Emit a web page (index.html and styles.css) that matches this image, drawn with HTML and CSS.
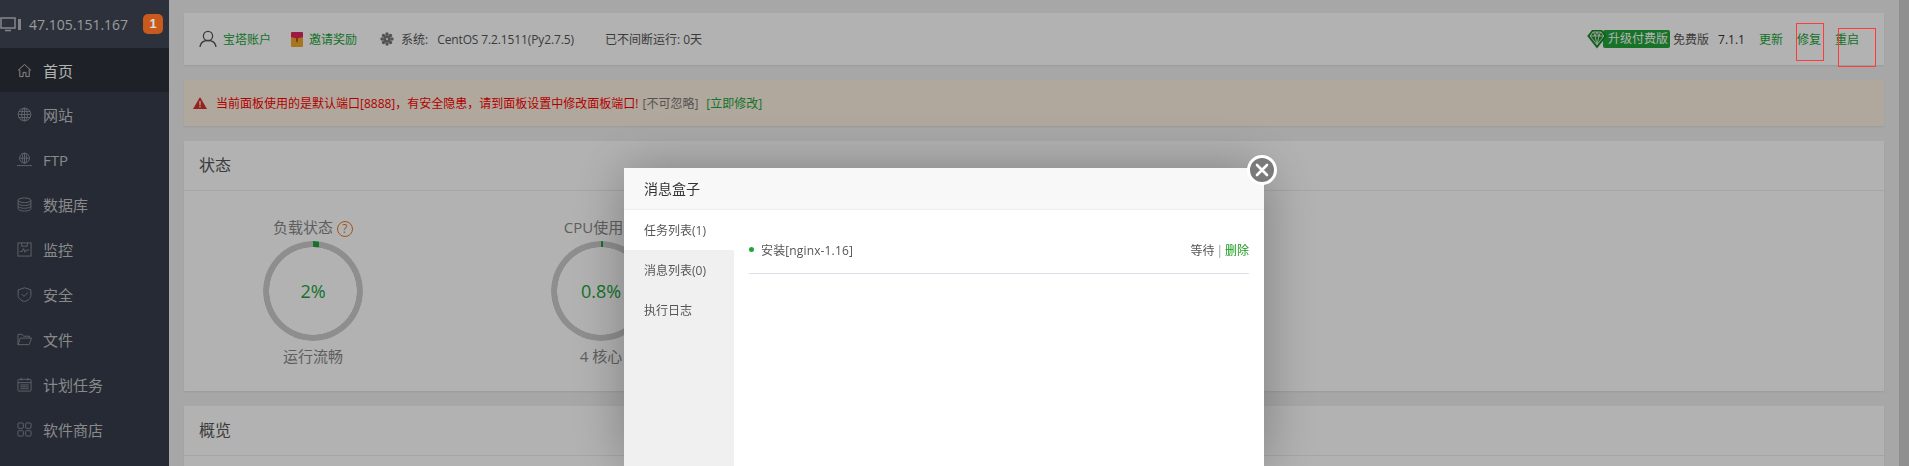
FILE: index.html
```html
<!DOCTYPE html>
<html lang="zh-CN">
<head>
    <meta charset="UTF-8">
    <title>宝塔面板</title>
    <link rel="stylesheet" href="styles.css">
</head>
<body>
    <div class="layout">
        <aside class="sidebar">
            <div class="server">
                <svg class="server-icon" viewBox="0 0 22 16" width="22" height="16" fill="none" stroke="#bbb" stroke-width="1.6"><rect x="1" y="2" width="14" height="10"/><path d="M5 14.5h6"/><rect x="18" y="3" width="3" height="11" fill="#bbb" stroke="none"/></svg>
                <span class="server-ip">47.105.151.167</span>
                <span class="badge">1</span>
            </div>
            <ul class="menu">
                <li class="menu-item active">
                    <svg viewBox="0 0 16 16" width="16" height="16"><path d="M1 8l7-6.5L15 8M3 7v7.500h3.500V10h3v4.500H13V7"/></svg>
                    <span>首页</span>
                </li>
                <li class="menu-item">
                    <svg viewBox="0 0 16 16" width="16" height="16"><circle cx="8" cy="8" r="6.800"/><ellipse cx="8" cy="8" rx="3" ry="6.800"/><path d="M1.200 8h13.600M2 4.800h12M2 11.200h12M8 1.200v13.600"/></svg>
                    <span>网站</span>
                </li>
                <li class="menu-item">
                    <svg viewBox="0 0 16 16" width="16" height="16"><circle cx="8" cy="6.500" r="5.300"/><ellipse cx="8" cy="6.500" rx="2.300" ry="5.300"/><path d="M2.700 6.500h10.600M8 1.200v10.600M0 14.500h16"/></svg>
                    <span>FTP</span>
                </li>
                <li class="menu-item">
                    <svg viewBox="0 0 16 16" width="16" height="16"><ellipse cx="8" cy="3.500" rx="6.800" ry="2.500"/><path d="M1.200 3.500v9c0 1.400 3 2.500 6.800 2.500s6.800-1.100 6.800-2.500v-9M1.200 6.500c0 1.400 3 2.500 6.800 2.500s6.800-1.100 6.800-2.500M1.200 9.500c0 1.400 3 2.500 6.800 2.500s6.800-1.100 6.800-2.500"/></svg>
                    <span>数据库</span>
                </li>
                <li class="menu-item">
                    <svg viewBox="0 0 16 16" width="16" height="16"><rect x="1" y="1" width="14" height="14"/><path d="M3 10h2.500l1.500-3 1.500 4 1.500-2.500H13M5 1v3.500h6V1"/></svg>
                    <span>监控</span>
                </li>
                <li class="menu-item">
                    <svg viewBox="0 0 16 16" width="16" height="16"><path d="M8 .8L14.800 3v6c0 3-3 5.500-6.800 6.500C4.200 14.500 1.200 12 1.200 9V3zM5 7.500l2.500 2.500L11.500 6"/></svg>
                    <span>安全</span>
                </li>
                <li class="menu-item">
                    <svg viewBox="0 0 16 16" width="16" height="16"><path d="M1 13.500V2.500h4.500l1.500 2h6.500v2M1 13.500h12L15.500 6.500H3.500z"/></svg>
                    <span>文件</span>
                </li>
                <li class="menu-item">
                    <svg viewBox="0 0 16 16" width="16" height="16"><rect x="1" y="2.500" width="14" height="12.500" rx="1"/><path d="M1 6h14M4.500 .8v3M11.500 .8v3M3.500 8.500h9M3.500 10.500h9M3.500 12.500h9"/></svg>
                    <span>计划任务</span>
                </li>
                <li class="menu-item">
                    <svg viewBox="0 0 16 16" width="16" height="16"><rect x="1" y="1" width="5.800" height="5.800" rx="1.200"/><rect x="9.200" y="1" width="5.800" height="5.800" rx="1.200"/><rect x="1" y="9.200" width="5.800" height="5.800" rx="1.200"/><rect x="9.200" y="9.200" width="5.800" height="5.800" rx="1.200"/></svg>
                    <span>软件商店</span>
                </li>
            </ul>
        </aside>

        <main class="content">
            <section class="card topbar">
                <div class="topbar-left">
                    <svg class="user-icon" viewBox="0 0 18 18" width="18" height="18" fill="none" stroke="#555" stroke-width="1.300"><circle cx="9" cy="6" r="4.600"/><path d="M1 17c.5-4 3.500-6.500 8-6.500s7.500 2.500 8 6.500"/></svg>
                    <a class="link account">宝塔账户</a>
                    <svg class="gift-icon" viewBox="0 0 12 15" width="12" height="15"><rect y="1" width="12" height="14" rx="1" fill="#f0a82a"/><path d="M0 1a1 1 0 0 1 1-1h10a1 1 0 0 1 1 1v4c-3 1.500-9 1.500-12 0z" fill="#e0245e"/><path d="M5 6h2v3l-1 2-1-2z" fill="#a85a10"/></svg>
                    <a class="link invite">邀请奖励</a>
                    <svg class="gear-icon" viewBox="0 0 14 14" width="14" height="14" fill="#777"><circle cx="7" cy="2" r="1.700"/><circle cx="7" cy="12" r="1.700"/><circle cx="2" cy="7" r="1.700"/><circle cx="12" cy="7" r="1.700"/><circle cx="3.500" cy="3.500" r="1.700"/><circle cx="10.500" cy="3.500" r="1.700"/><circle cx="3.500" cy="10.500" r="1.700"/><circle cx="10.500" cy="10.500" r="1.700"/><circle cx="7" cy="7" r="3.800"/><circle cx="7" cy="7" r="1.200" fill="#ddd"/></svg>
                    <span class="sys-label">系统:</span>
                    <span class="sys-name">CentOS 7.2.1511(Py2.7.5)</span>
                    <span>已不间断运行: 0天</span>
                </div>
                <div class="topbar-right">
                    <span class="upgrade">
                        <svg class="gem" viewBox="0 0 20 20" width="20" height="20"><path d="M5 1h10L19.800 7 10 19.500 .2 7z" fill="#1c8a2a"/><path d="M6 3h8L16.800 7 10 15.800 3.200 7zM3.200 7h13.600M8 7l2 8.500 2-8.500M6.500 3L8 7l2-4L12 7l1.500-4" fill="none" stroke="#e4f2e4" stroke-width=".9"/></svg>
                        <span class="upgrade-text">升级付费版</span>
                    </span>
                    <span class="free">免费版</span>
                    <span class="version">7.1.1</span>
                    <a class="link update">更新</a>
                    <a class="link repair">修复<i class="mark mark-repair"></i></a>
                    <a class="link restart">重启<i class="mark mark-restart"></i></a>
                </div>
            </section>

            <section class="card warning">
                <svg viewBox="0 0 14 12" width="14" height="12"><path d="M7 0l7 12H0z" fill="#d9302c"/><path d="M6.300 4h1.400v4.200H6.300zM6.300 9h1.400v1.400H6.300z" fill="#f3e6d0"/></svg>
                <span class="warning-text">当前面板使用的是默认端口[8888]，有安全隐患，请到面板设置中修改面板端口!</span>
                <span class="ignore">[不可忽略]</span>
                <a class="link fix">[立即修改]</a>
            </section>

            <section class="card status">
                <h2 class="card-title">状态</h2>
                <div class="gauges">
                    <div class="gauge">
                        <div class="gauge-label">负载状态 <span class="help">?</span></div>
                        <div class="ring ring-load"><span class="ring-value">2%</span></div>
                        <div class="gauge-note">运行流畅</div>
                    </div>
                    <div class="gauge">
                        <div class="gauge-label">CPU使用率</div>
                        <div class="ring ring-cpu"><span class="ring-value">0.8%</span></div>
                        <div class="gauge-note">4 核心</div>
                    </div>
                </div>
            </section>

            <section class="card overview">
                <h2 class="card-title">概览</h2>
            </section>
        </main>
        <div class="scrollbar"></div>
    </div>

    <div class="shade"></div>

    <div class="dialog">
        <button class="dialog-close" type="button">
            <svg viewBox="0 0 14 14" width="14" height="14"><path d="M2 2l10 10M12 2L2 12" stroke="#fff" stroke-width="2.600" stroke-linecap="round"/></svg>
        </button>
        <div class="dialog-title">消息盒子</div>
        <div class="dialog-body">
            <ul class="tabs">
                <li class="tab on">任务列表(1)</li>
                <li class="tab">消息列表(0)</li>
                <li class="tab">执行日志</li>
            </ul>
            <div class="tasks">
                <div class="task">
                    <span class="task-dot"></span>
                    <span class="task-name">安装[nginx-1.16]</span>
                    <span class="task-state">等待<span class="task-sep">|</span><a class="task-del">删除</a></span>
                </div>
            </div>
        </div>
    </div>
</body>
</html>
```

FILE: styles.css
```css
* {
    margin: 0;
    padding: 0;
    box-sizing: border-box;
}

html, body {
    height: 466px;
    overflow: hidden;
}

body {
    font-family: "Open Sans", "Noto Sans CJK SC", sans-serif;
    font-size: 12px;
    color: #555;
    background-color: #f0f0f0;
}

ul {
    list-style: none;
}

.layout {
    display: flex;
    height: 466px;
}

/* sidebar */
.sidebar {
    width: 169px;
    flex-shrink: 0;
    background-color: #353d4c;
}

.server {
    height: 48px;
    display: flex;
    align-items: center;
    background-color: #3f4756;
    color: #fff;
}

.server-icon {
    flex-shrink: 0;
    margin-right: 7px;
}

.server-ip {
    font-size: 14px;
    width: 114px;
    color: #ddd;
}

/* sits above the shade in the screenshot */
.badge {
    position: relative;
    z-index: 2;
    width: 20px;
    height: 20px;
    line-height: 20px;
    border-radius: 5px;
    background-color: #c95a1e;
    color: #ddd;
    font-family: "Liberation Sans", sans-serif;
    font-size: 13px;
    font-weight: bold;
    text-align: center;
}

.menu-item {
    height: 45px;
    display: flex;
    align-items: center;
    padding-left: 17px;
    font-size: 15px;
    color: #c4c4c4;
}

.menu-item svg {
    width: 15px;
    height: 15px;
    margin-right: 11px;
    fill: none;
    stroke: #8a8f98;
    stroke-width: 1;
}

.menu-item.active {
    height: 44px;
    background-color: #2b3038;
    color: #fff;
}

.menu-item.active svg {
    stroke: #ccc;
}

/* main column */
.content {
    flex: 1;
    padding: 13px 15px 0;
    min-width: 0;
}

.scrollbar {
    width: 10px;
    flex-shrink: 0;
    background-color: #cdcdcd;
}

.card {
    background-color: #fff;
    box-shadow: 0 1px 2px rgba(0, 0, 0, 0.08);
}

.link {
    color: #20a53a;
}

.topbar {
    height: 52px;
    display: flex;
    align-items: center;
    justify-content: space-between;
    padding: 0 15px;
}

.topbar-left,
.topbar-right {
    display: flex;
    align-items: center;
}

.user-icon {
    margin-right: 6px;
}

.account {
    margin-right: 20px;
}

.gift-icon {
    margin-right: 6px;
}

.invite {
    margin-right: 23px;
}

.gear-icon {
    margin-right: 7px;
}

.sys-label {
    margin-right: 9px;
}

.sys-name {
    margin-right: 31px;
    letter-spacing: -0.12px;
}

.topbar-right {
    padding-right: 10px;
}

.upgrade {
    display: flex;
    align-items: center;
    margin-right: 3px;
}

.gem {
    margin-right: -4px;
    position: relative;
    z-index: 1;
}

.upgrade-text {
    height: 18px;
    line-height: 17px;
    padding: 0 2px 0 5px;
    border-radius: 2px;
    background-color: #20a53a;
    color: #fff;
}

.free {
    margin-right: 9px;
}

.version {
    margin-right: 14px;
    color: #333;
}

.update {
    margin-right: 14px;
}

.repair {
    margin-right: 14px;
    position: relative;
}

.restart {
    position: relative;
}

/* red boxes drawn on the screenshot, above the shade */
.mark {
    position: absolute;
    z-index: 2;
    border: 1px solid #ff3b3b;
}

.mark-repair {
    left: -1px;
    top: -7px;
    width: 28px;
    height: 38px;
}

.mark-restart {
    left: 3px;
    top: -2px;
    width: 38px;
    height: 39px;
}

.warning {
    height: 46px;
    margin-top: 15px;
    display: flex;
    align-items: center;
    padding: 0 9px;
    background-color: #fdf1e0;
}

.warning svg {
    margin-right: 9px;
}

.warning-text {
    color: #ff0000;
}

.ignore {
    margin-left: 4px;
    color: #777;
}

.fix {
    margin-left: 8px;
}

.status {
    height: 250px;
    margin-top: 15px;
}

.card-title {
    height: 50px;
    line-height: 48px;
    padding-left: 15px;
    border-bottom: 1px solid #ececec;
    font-size: 16px;
    font-weight: normal;
    color: #555;
}

.gauges {
    display: flex;
    padding-top: 26px;
    padding-left: 79px;
}

.gauge {
    width: 100px;
    margin-right: 188px;
    text-align: center;
    color: #888;
    font-size: 15px;
}

.gauge-label {
    white-space: nowrap;
    line-height: 20px;
}

.help {
    display: inline-block;
    width: 16px;
    height: 16px;
    line-height: 14px;
    border: 1px solid #e77a21;
    border-radius: 50%;
    color: #e77a21;
    font-size: 12px;
}

.ring {
    width: 100px;
    height: 100px;
    margin-top: 4px;
    border-radius: 50%;
    display: flex;
    align-items: center;
    justify-content: center;
    position: relative;
}

.ring::before {
    content: "";
    position: absolute;
    inset: 0;
    border-radius: 50%;
    -webkit-mask: radial-gradient(circle, transparent 43.500px, #000 44px);
    mask: radial-gradient(circle, transparent 43.500px, #000 44px);
}

.ring-load::before {
    background: conic-gradient(#20a53a 0 2%, #ccc 2% 100%);
}

.ring-cpu::before {
    background: conic-gradient(#20a53a 0 0.8%, #ccc 0.8% 100%);
}

.ring-value {
    color: #20a53a;
    font-size: 18px;
}

.gauge-note {
    margin-top: 5px;
    line-height: 20px;
}

.overview {
    height: 60px;
    margin-top: 15px;
}

/* modal */
.shade {
    position: fixed;
    inset: 0;
    z-index: 1;
    background-color: rgba(0, 0, 0, 0.3);
}

.dialog {
    position: fixed;
    z-index: 1;
    left: 624px;
    top: 168px;
    bottom: 0;
    width: 640px;
    display: flex;
    flex-direction: column;
    background-color: #fff;
    box-shadow: 1px 1px 50px rgba(0, 0, 0, 0.3);
    color: #555;
}

.dialog-title {
    height: 42px;
    flex-shrink: 0;
    line-height: 41px;
    padding-left: 20px;
    background-color: #f8f8f8;
    border-bottom: 1px solid #eee;
    font-size: 14px;
    color: #333;
}

.dialog-close {
    position: absolute;
    right: -13px;
    top: -13px;
    width: 30px;
    height: 30px;
    border: 3px solid #fff;
    border-radius: 50%;
    background-color: #7a7a7a;
    display: flex;
    align-items: center;
    justify-content: center;
}

.dialog-body {
    display: flex;
    flex: 1;
}

.tabs {
    width: 110px;
    background-color: #f0f0f0;
}

.tab {
    height: 40px;
    line-height: 42px;
    padding-left: 20px;
    color: #555;
}

.tab.on {
    background-color: #fff;
}

.tasks {
    flex: 1;
    padding: 15px 15px 0;
}

.task {
    height: 49px;
    display: flex;
    align-items: center;
    padding-top: 1px;
    border-bottom: 1px solid #dfdee8;
}

.task-dot {
    width: 5px;
    height: 5px;
    border-radius: 50%;
    background-color: #20a53a;
    margin-right: 7px;
}

.task-name {
    flex: 1;
    letter-spacing: 0.14px;
}

.task-state {
    color: #555;
}

.task-sep {
    margin: 0 2px;
    color: #999;
}

.task-del {
    color: #1a9a1a;
}
```
